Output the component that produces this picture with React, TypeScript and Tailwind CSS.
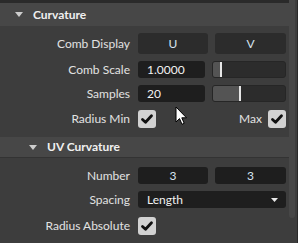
import React from 'react';

const Caret: React.FC = () => (
  <svg width="8" height="5" viewBox="0 0 8 5" className="shrink-0">
    <path d="M0 0 L8 0 L4 5 Z" fill="#cdcdcd" />
  </svg>
);

const PanelHeader: React.FC<{ title: string; indent: number }> = ({ title, indent }) => (
  <div
    className="h-[23px] bg-[#474747] flex items-center gap-[10px] font-bold text-[12px] text-[#f0f0f0]"
    style={{ paddingLeft: indent }}
  >
    <Caret />
    <span>{title}</span>
  </div>
);

const Label: React.FC<{ children: React.ReactNode }> = ({ children }) => (
  <div className="w-[130px] shrink-0 text-right text-[#e2e2e2]">{children}</div>
);

const Check: React.FC = () => (
  <div className="w-[18px] h-[18px] rounded-[3px] bg-[#d2d2d2] flex items-center justify-center">
    <svg width="14" height="14" viewBox="0 0 14 14">
      <path d="M2.5 7.5 L5.5 10.3 L11.5 3.8" stroke="#111" strokeWidth="2.8" fill="none" strokeLinecap="round" strokeLinejoin="round" />
    </svg>
  </div>
);

const Slider: React.FC<{ pos: number }> = ({ pos }) => (
  <div className="w-[74px] h-[17px] rounded-[3px] bg-[#2c2c2c] border border-[#262626] flex overflow-hidden">
    <div className="h-full bg-[#545454]" style={{ width: pos }} />
    <div className="w-[2px] h-full bg-[#e6e6e6]" />
  </div>
);

export default function App() {
  return (
    <div className="relative w-[298px] h-[243px] bg-[#3d3d3d] flex overflow-hidden font-['Lato',sans-serif] text-[12px] text-[#e2e2e2]">
      <div className="w-[289px] flex flex-col">
        <div className="h-[3px] bg-[#2a2a2a]" />
        <PanelHeader title="Curvature" indent={15} />

        {/* Comb Display */}
        <div className="flex items-center mt-[7px] h-[21px]">
          <Label>Comb Display</Label>
          <div className="ml-[8px] flex gap-[7px]">
            <div className="w-[70px] h-[21px] rounded-[3px] bg-[#2c2c2c] flex items-center justify-center text-[#d8e4f0]">U</div>
            <div className="w-[71px] h-[21px] rounded-[3px] bg-[#2c2c2c] flex items-center justify-center text-[#d8e4f0]">V</div>
          </div>
        </div>

        {/* Comb Scale */}
        <div className="flex items-center mt-[7px] h-[17px]">
          <Label>Comb Scale</Label>
          <div className="ml-[8px] flex gap-[7px]">
            <div className="w-[67px] h-[17px] rounded-[3px] bg-[#1e1e1e] flex items-center pl-[9px] text-[#f2f2f2]">1.0000</div>
            <Slider pos={7} />
          </div>
        </div>

        {/* Samples */}
        <div className="flex items-center mt-[7px] h-[17px]">
          <Label>Samples</Label>
          <div className="ml-[8px] flex gap-[7px]">
            <div className="w-[67px] h-[17px] rounded-[3px] bg-[#1e1e1e] flex items-center pl-[9px] text-[#f2f2f2]">20</div>
            <Slider pos={26} />
          </div>
        </div>

        {/* Radius Min / Max */}
        <div className="flex items-center mt-[8px] h-[18px]">
          <Label>Radius Min</Label>
          <div className="ml-[8px] w-[148px] flex items-center">
            <Check />
            <div className="flex-1" />
            <span className="mr-[6px]">Max</span>
            <Check />
          </div>
        </div>

        <div className="mt-[9px]">
          <div className="h-[20px] bg-[#474747] flex items-center gap-[10px] pl-[29px] font-bold text-[12px] text-[#f0f0f0]">
            <Caret />
            <span>UV Curvature</span>
          </div>
          <div className="h-[1px] bg-[#333333]" />
        </div>

        {/* Number */}
        <div className="flex items-center mt-[9px] h-[17px]">
          <Label>Number</Label>
          <div className="ml-[8px] flex gap-[7px]">
            <div className="w-[70px] h-[17px] rounded-[3px] bg-[#1e1e1e] flex items-center justify-center text-[#d8e4f0]">3</div>
            <div className="w-[71px] h-[17px] rounded-[3px] bg-[#1e1e1e] flex items-center justify-center text-[#d8e4f0]">3</div>
          </div>
        </div>

        {/* Spacing */}
        <div className="flex items-center mt-[7px] h-[17px]">
          <Label>Spacing</Label>
          <div className="ml-[8px] w-[148px] h-[17px] rounded-[3px] bg-[#1e1e1e] flex items-center pl-[9px] pr-[8px] text-[#f2f2f2]">
            <span className="flex-1">Length</span>
            <svg width="7" height="4" viewBox="0 0 7 4">
              <path d="M0 0 L7 0 L3.5 4 Z" fill="#e8e8e8" />
            </svg>
          </div>
        </div>

        {/* Radius Absolute */}
        <div className="flex items-center mt-[9px] h-[18px]">
          <Label>Radius Absolute</Label>
          <div className="ml-[8px]">
            <Check />
          </div>
        </div>
      </div>

      {/* scrollbar */}
      <div className="flex-1 flex">
        <div className="w-[6px] h-[218px] bg-[#474747] rounded-b-[3px]" />
        <div className="flex-1" />
        <div className="w-[1px] bg-[#2a2a2a]" />
      </div>

      {/* mouse cursor */}
      <svg className="absolute left-[175px] top-[106px]" width="13" height="20" viewBox="0 0 13 20">
        <path
          d="M1 1 L1 16 L4.5 12.6 L7 18.3 L9.2 17.3 L6.8 11.8 L11.5 11.8 Z"
          fill="#ffffff"
          stroke="#000000"
          strokeWidth="1"
          strokeLinejoin="miter"
        />
      </svg>
    </div>
  );
}
